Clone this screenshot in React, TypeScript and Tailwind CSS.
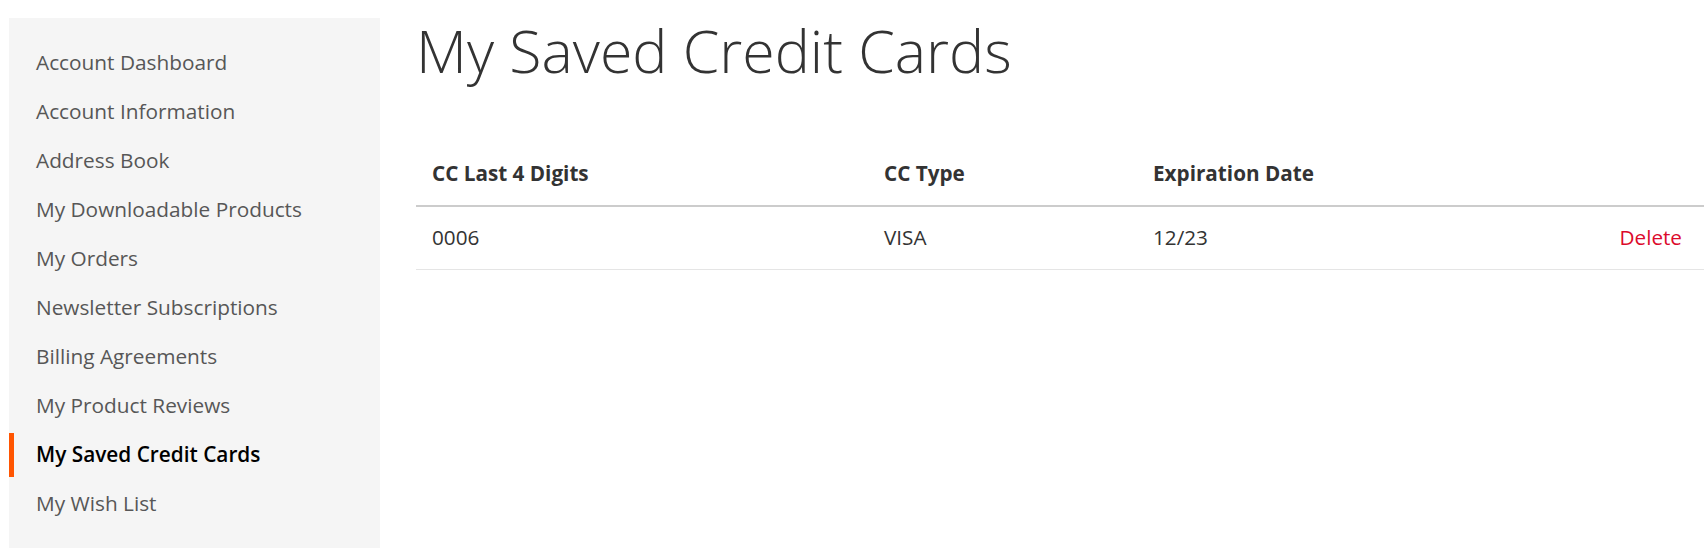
import React from 'react';

const navItems = [
  'Account Dashboard',
  'Account Information',
  'Address Book',
  'My Downloadable Products',
  'My Orders',
  'Newsletter Subscriptions',
  'Billing Agreements',
  'My Product Reviews',
  'My Saved Credit Cards',
  'My Wish List',
];

const active = 'My Saved Credit Cards';

const App: React.FC = () => {
  return (
    <div
      className="flex items-start bg-white min-h-[560px] text-[#333]"
      style={{ fontFamily: '"Open Sans", "Liberation Sans", sans-serif' }}
    >
      <aside className="ml-[9px] mt-[18px] w-[371px] h-[530px] shrink-0 bg-[#f5f5f5] pt-[20px] pb-[20px]">
        <ul>
          {navItems.map((item) => {
            const isActive = item === active;
            return (
              <li key={item} className="relative h-[49px] py-[10px] pl-[27px]">
                {isActive && (
                  <span className="absolute left-0 top-[3px] h-[44px] w-[5px] bg-[#ff5501]" />
                )}
                <span
                  className={`block text-[20.8px] leading-[29px] ${
                    isActive ? 'font-semibold text-black' : 'text-[#575757]'
                  }`}
                >
                  {item}
                </span>
              </li>
            );
          })}
        </ul>
      </aside>

      <main className="flex-1 ml-[36px] pt-[17px]">
        <h1 className="text-[59px] font-light leading-[66px] text-[#333]">My Saved Credit Cards</h1>

        <div className="mt-[60px]">
          <div className="flex border-b-2 border-[#cccccc] text-[20.7px] leading-[29px] font-bold text-[#333]">
            <div className="w-[452px] pt-[16px] pb-[17px] pl-[16px]">CC Last 4 Digits</div>
            <div className="w-[269px] pt-[16px] pb-[17px] pl-[16px]">CC Type</div>
            <div className="flex-1 pt-[16px] pb-[17px] pl-[16px]">Expiration Date</div>
          </div>
          <div className="flex border-b border-[#e5e5e5] text-[20.7px] leading-[29px] text-[#333]">
            <div className="w-[452px] pt-[16px] pb-[17px] pl-[16px]">0006</div>
            <div className="w-[269px] pt-[16px] pb-[17px] pl-[16px]">VISA</div>
            <div className="flex-1 pt-[16px] pb-[17px] pl-[16px]">12/23</div>
            <div className="pt-[16px] pb-[17px] pr-[22px] text-right">
              <a href="#" className="text-[#dc0a2c]">Delete</a>
            </div>
          </div>
        </div>
      </main>
    </div>
  );
};

export default App;
